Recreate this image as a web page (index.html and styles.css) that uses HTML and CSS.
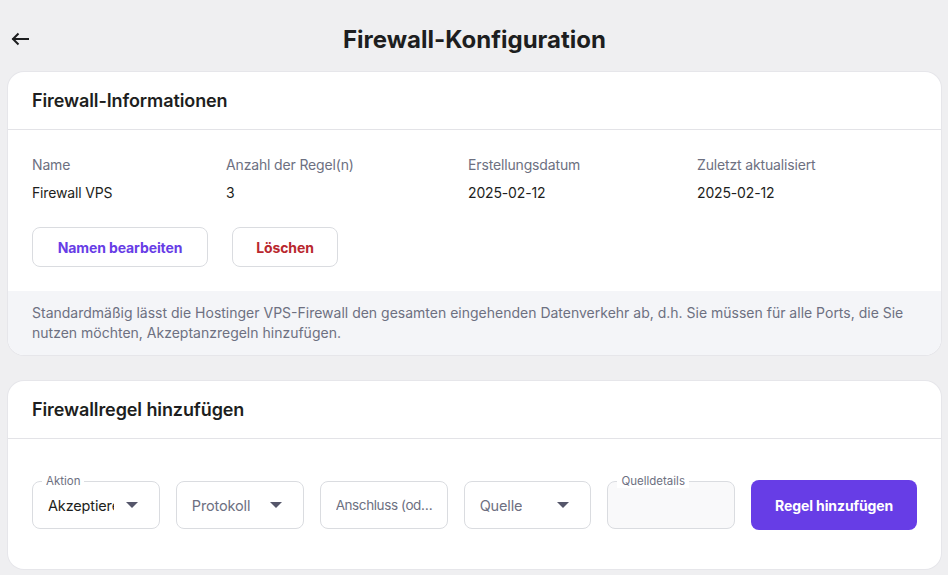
FILE: index.html
```html
<!DOCTYPE html>
<html lang="de">
<head>
<meta charset="utf-8">
<title>Firewall-Konfiguration</title>
<link rel="stylesheet" href="styles.css">
</head>
<body>
<div class="page">
  <header class="topbar">
    <button class="back" aria-label="Zurück">
      <svg width="18" height="14" viewBox="0 0 18 14" fill="none" stroke="#1d1e20" stroke-width="2" stroke-linecap="square"><path d="M17 7H2.5"/><path d="M7.5 1.5L2 7l5.5 5.5" stroke-linecap="butt"/></svg>
    </button>
    <h1 class="title">Firewall-Konfiguration</h1>
    <span class="spacer"></span>
  </header>

  <section class="card">
    <div class="card-head">Firewall-Informationen</div>
    <div class="card-body">
      <div class="info">
        <div class="info-col"><div class="lbl">Name</div><div class="val">Firewall VPS</div></div>
        <div class="info-col"><div class="lbl">Anzahl der Regel(n)</div><div class="val">3</div></div>
        <div class="info-col"><div class="lbl">Erstellungsdatum</div><div class="val">2025-02-12</div></div>
        <div class="info-col"><div class="lbl">Zuletzt aktualisiert</div><div class="val">2025-02-12</div></div>
      </div>
      <div class="actions">
        <button class="btn-outline purple">Namen bearbeiten</button>
        <button class="btn-outline red">Löschen</button>
      </div>
    </div>
    <div class="card-foot">Standardmäßig lässt die Hostinger VPS-Firewall den gesamten eingehenden Datenverkehr ab, d.h. Sie müssen für alle Ports, die Sie nutzen möchten, Akzeptanzregeln hinzufügen.</div>
  </section>

  <section class="card">
    <div class="card-head">Firewallregel hinzufügen</div>
    <div class="rule-body">
      <div class="field">
        <span class="float-lbl">Aktion</span>
        <span class="field-text dark">Akzeptieren</span>
        <span class="caret"></span>
      </div>
      <div class="field">
        <span class="field-text">Protokoll</span>
        <span class="caret"></span>
      </div>
      <div class="field">
        <span class="field-text ell">Anschluss (oder Bereich)</span>
      </div>
      <div class="field">
        <span class="field-text">Quelle</span>
        <span class="caret"></span>
      </div>
      <div class="field disabled">
        <span class="float-lbl">Quelldetails</span>
      </div>
      <button class="btn-primary">Regel hinzufügen</button>
    </div>
  </section>
</div>
</body>
</html>
```

FILE: styles.css
```css
* { box-sizing: border-box; }
html, body { margin: 0; padding: 0; }
body {
  background: #efeff1;
  font-family: "Inter", "DejaVu Sans", sans-serif;
  color: #1d1e20;
  -webkit-font-smoothing: antialiased;
}
.page {
  padding: 0 7px 0 8px;
}
.topbar {
  height: 72px;
  display: flex;
  align-items: center;
  padding-top: 6px;
}
.back {
  width: 40px;
  height: 40px;
  border: 0;
  background: none;
  padding: 0 0 0 3px;
  display: flex;
  align-items: center;
  justify-content: flex-start;
  cursor: pointer;
}
.title {
  flex: 1;
  text-align: center;
  margin: 0;
  font-size: 24px;
  font-weight: 700;
  letter-spacing: 0;
  color: #1d1e20;
}
.spacer { width: 40px; }

.card {
  background: #fff;
  border-radius: 16px;
  overflow: hidden;
  box-shadow: 0 0 0 1px #e6e6ea;
  margin-bottom: 26px;
}
.card-head {
  height: 58px;
  display: flex;
  align-items: center;
  padding: 0 24px;
  font-size: 18px;
  font-weight: 600;
  letter-spacing: -0.1px;
  border-bottom: 1px solid #e3e3e7;
}
.card-body {
  padding: 25px 24px 24px;
}
.info {
  display: grid;
  grid-template-columns: 194px 242px 229px 1fr;
}
.lbl {
  font-size: 14px;
  color: #6d7081;
  line-height: 20px;
  letter-spacing: -0.15px;
}
.val {
  margin-top: 8px;
  font-size: 14px;
  line-height: 20px;
  color: #1d1e20;
  letter-spacing: -0.15px;
}
.actions {
  margin-top: 24px;
  display: flex;
  gap: 24px;
}
.btn-outline {
  height: 40px;
  padding: 0 16px;
  background: #fff;
  border: 1px solid #dadce0;
  border-radius: 8px;
  font-family: inherit;
  font-size: 14px;
  font-weight: 700;
  letter-spacing: -0.1px;
  cursor: pointer;
}
.btn-outline.purple { color: #673de6; width: 176px; }
.btn-outline.red { color: #b9282f; width: 106px; }
.card-foot {
  background: #f4f5f8;
  padding: 12px 24px 12px;
  font-size: 14px;
  line-height: 20px;
  color: #6d7081;
  letter-spacing: 0;
}

.rule-body {
  display: flex;
  align-items: center;
  gap: 16px;
  padding: 41px 24px 39px;
}
.field {
  position: relative;
  width: 128px;
  height: 48px;
  border: 1px solid #dadce0;
  border-radius: 8px;
  display: flex;
  align-items: center;
  padding: 0 8px 0 15px;
  background: #fff;
}
.field.disabled { background: #f9f9fa; }
.float-lbl {
  position: absolute;
  top: -8px;
  left: 9px;
  padding: 0 4px;
  background: #fff;
  font-size: 11.5px;
  line-height: 14px;
  color: #6d7081;
}
.field-text {
  font-size: 14.5px;
  color: #6d7081;
  white-space: nowrap;
  flex: 0 1 auto;
  overflow: hidden;
  letter-spacing: -0.15px;
}
.field-text.dark { color: #1d1e20; flex: 0 0 66px; }
.field-text.ell { text-overflow: ellipsis; font-size: 13.5px; letter-spacing: -0.4px; }
.caret {
  margin-left: auto;
  width: 0;
  height: 0;
  border-left: 6px solid transparent;
  border-right: 6px solid transparent;
  border-top: 6px solid #55566a;
  margin-right: 13px;
  flex: 0 0 auto;
}
.btn-primary {
  width: 166px;
  height: 50px;
  border: 0;
  border-radius: 8px;
  background: #673de6;
  color: #fff;
  font-family: inherit;
  font-size: 14px;
  font-weight: 700;
  letter-spacing: -0.1px;
  cursor: pointer;
}
```
